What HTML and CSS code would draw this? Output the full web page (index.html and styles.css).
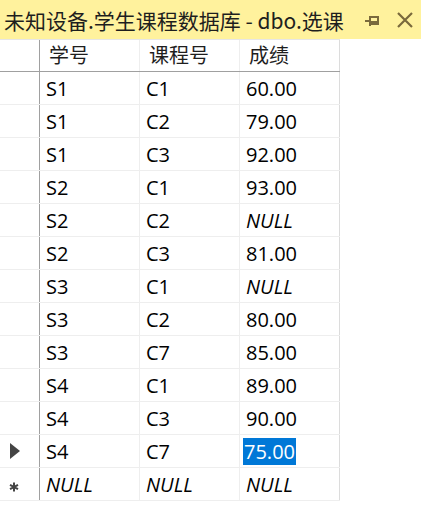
FILE: index.html
```html
<!DOCTYPE html>
<html lang="zh">
<head>
<meta charset="utf-8">
<link rel="stylesheet" href="styles.css">
</head>
<body>
<div class="tab">
  <span class="title">未知设备.学生课程数据库 - dbo.选课</span>
  <span class="tab-icons">
    <svg class="pin" width="16" height="14" viewBox="0 0 16 14"><path d="M1 7H6M6 2V12M6 3H14V10H6M6 8H14" fill="none" stroke="#7a6a3c" stroke-width="2"/></svg>
    <svg class="close" width="18" height="18" viewBox="0 0 18 18"><path d="M2 2L16 16M16 2L2 16" stroke="#7a6a3c" stroke-width="2.2"/></svg>
  </span>
</div>
<div class="grid">
  <div class="row head">
    <div class="rh"></div><div class="c">学号</div><div class="c">课程号</div><div class="c">成绩</div>
  </div>
  <div class="row"><div class="rh"></div><div class="c">S1</div><div class="c">C1</div><div class="c">60.00</div></div>
  <div class="row"><div class="rh"></div><div class="c">S1</div><div class="c">C2</div><div class="c">79.00</div></div>
  <div class="row"><div class="rh"></div><div class="c">S1</div><div class="c">C3</div><div class="c">92.00</div></div>
  <div class="row"><div class="rh"></div><div class="c">S2</div><div class="c">C1</div><div class="c">93.00</div></div>
  <div class="row"><div class="rh"></div><div class="c">S2</div><div class="c">C2</div><div class="c null">NULL</div></div>
  <div class="row"><div class="rh"></div><div class="c">S2</div><div class="c">C3</div><div class="c">81.00</div></div>
  <div class="row"><div class="rh"></div><div class="c">S3</div><div class="c">C1</div><div class="c null">NULL</div></div>
  <div class="row"><div class="rh"></div><div class="c">S3</div><div class="c">C2</div><div class="c">80.00</div></div>
  <div class="row"><div class="rh"></div><div class="c">S3</div><div class="c">C7</div><div class="c">85.00</div></div>
  <div class="row"><div class="rh"></div><div class="c">S4</div><div class="c">C1</div><div class="c">89.00</div></div>
  <div class="row"><div class="rh"></div><div class="c">S4</div><div class="c">C3</div><div class="c">90.00</div></div>
  <div class="row"><div class="rh"><svg width="10" height="16" viewBox="0 0 10 16"><path d="M0 0L10 8L0 16Z" fill="#444"/></svg></div><div class="c">S4</div><div class="c">C7</div><div class="c"><span class="sel">75.00</span></div></div>
  <div class="row"><div class="rh"><svg class="star" width="10" height="10" viewBox="0 0 10 10"><path d="M5 0.5V9.5M1 2.8L9 7.2M9 2.8L1 7.2" stroke="#444" stroke-width="2"/></svg></div><div class="c null">NULL</div><div class="c null">NULL</div><div class="c null">NULL</div></div>
</div>
</body>
</html>
```
FILE: styles.css
```css
* { box-sizing: border-box; }
html, body { margin: 0; padding: 0; background: #fff; }
body { font-family: "Open Sans", "Noto Sans CJK SC", sans-serif; color: #000; }
.tab {
  height: 39px;
  background: #fff29d;
  display: flex;
  align-items: center;
  justify-content: space-between;
  padding: 0 7px 0 4px;
}
.title {
  font-family: "Noto Sans CJK SC", sans-serif;
  font-size: 21px;
  color: #1e1e1e;
  white-space: nowrap;
}
.tab-icons { display: flex; align-items: center; gap: 16px; }
.pin { margin-top: 2px; }
.grid { width: 340px; }
.row {
  display: grid;
  grid-template-columns: 40px 100px 100px 100px;
  height: 33px;
  border-bottom: 1px solid #eeeeee;
}
.row.head {
  height: 33px;
  border-top: 1px solid #e6e6e6;
  border-bottom: 1px solid #a0a0a0;
}
.rh {
  border-right: 1px solid #a0a0a0;
  display: flex;
  align-items: center;
  justify-content: center;
}
.rh svg { margin-left: -9px; }
.rh svg.star { margin-left: -12px; margin-top: 6px; }
.c {
  border-right: 1px solid #eeeeee;
  padding-left: 6px;
  display: flex;
  align-items: center;
  font-size: 20px;
  white-space: nowrap;
}
.head .c {
  font-family: "Noto Sans CJK SC", sans-serif;
  font-size: 20px;
  padding-left: 9px;
  padding-bottom: 2px;
  color: #1e1e1e;
}
.row .c:last-child { border-right-color: #dcdcdc; }
.null { font-style: italic; }
.sel { background: #0078d7; color: #fff; padding: 0 1px; line-height: 27px; margin-left: -3px; }
```
